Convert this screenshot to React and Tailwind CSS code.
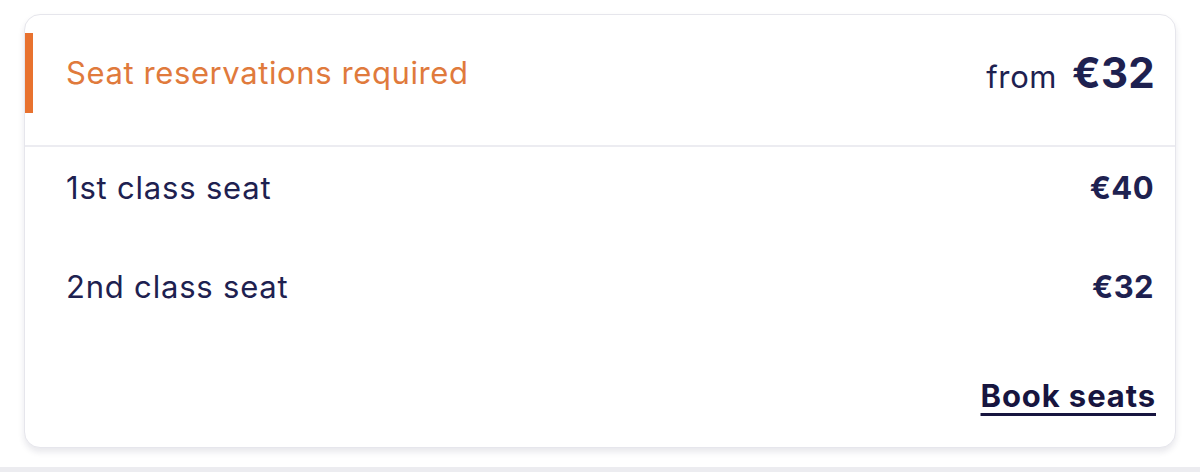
import React from 'react';

const prices = [
    { label: '1st class seat', price: '€40' },
    { label: '2nd class seat', price: '€32' },
];

export default function App() {
    return (
        <div className="w-[1200px] h-[472px] bg-white relative overflow-hidden" style={{ fontFamily: 'Inter, "Noto Sans", sans-serif' }}>
            <div className="pt-[14px] px-[24px]">
                {/* Card */}
                <div className="w-[1152px] h-[434px] bg-white border border-[#e6e6ec] rounded-[16px] shadow-[0_4px_6px_rgba(30,30,70,0.10)] overflow-hidden">
                    {/* Header */}
                    <div className="pt-[18px] pb-[32px] border-b-2 border-[#ececf1]">
                        <div className="relative flex items-center justify-between h-[80px] pl-[41px] pr-[20px]">
                            <span className="absolute left-[-1px] top-0 w-[9px] h-[80px] bg-[#e8722f]" />
                            <p className="text-[31px] leading-[36px] text-[#e07a3c] tracking-[0.6px]">Seat reservations required</p>
                            <p className="flex items-baseline text-[#1e2150]">
                                <span className="text-[31px] leading-[36px] tracking-[0.6px] mr-[15px]">from</span>
                                <span className="text-[42px] leading-[44px] font-bold tracking-[0.2px]">€32</span>
                            </p>
                        </div>
                    </div>

                    {/* Rows */}
                    <div className="flex flex-col pl-[41px] pr-[21px] pt-[23px] text-[#1e2150]">
                        {prices.map((row, i) => (
                            <div key={row.label} className={`flex items-center justify-between h-[36px] ${i > 0 ? 'mt-[63px]' : ''}`}>
                                <span className="text-[31px] leading-[36px] tracking-[0.8px]">{row.label}</span>
                                <span className="text-[31px] leading-[36px] font-bold tracking-[0.4px]">{row.price}</span>
                            </div>
                        ))}
                        <div className="flex justify-end mt-[73px] -mr-[2px]">
                            <a href="#" className="text-[31px] leading-[36px] font-bold text-[#17153f] tracking-[0.9px] underline decoration-[3px] underline-offset-[6px]">Book seats</a>
                        </div>
                    </div>
                </div>
            </div>
            <div className="absolute left-0 bottom-0 w-full h-[5px] bg-[#ececf0]" />
        </div>
    );
}
